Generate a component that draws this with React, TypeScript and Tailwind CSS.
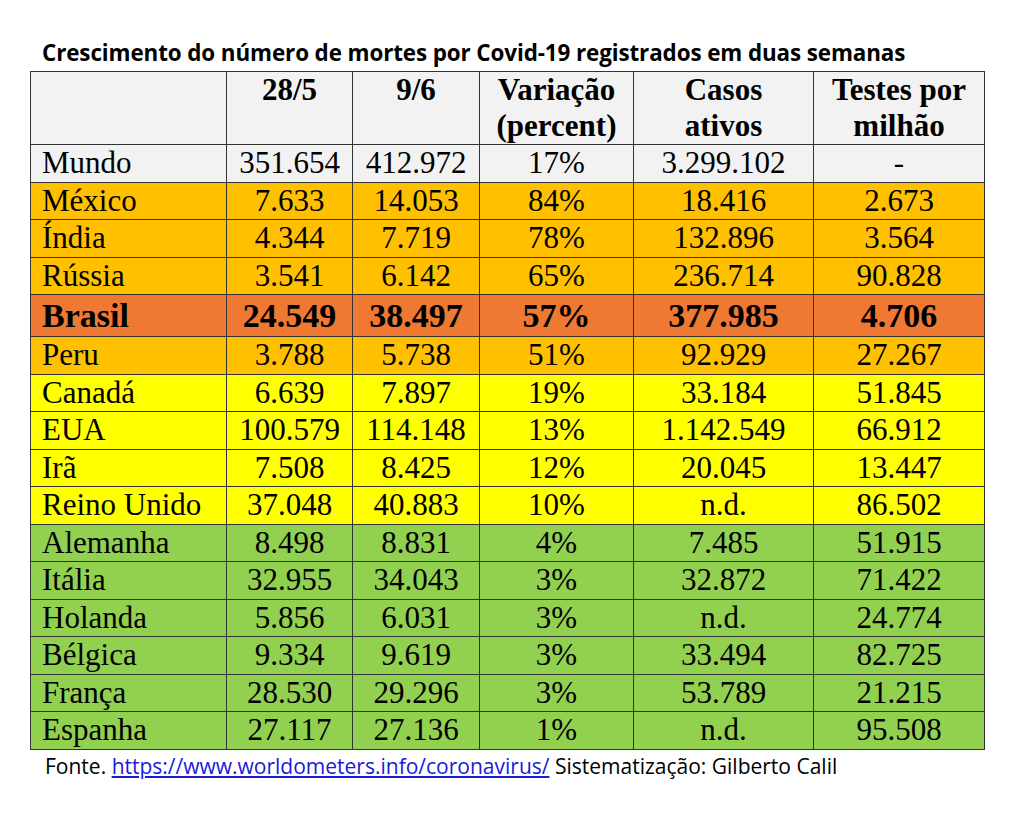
import React from 'react';

type Row = {
  name: string;
  d1: string;
  d2: string;
  pct: string;
  casos: string;
  testes: string;
  bg: string;
  bold?: boolean;
};

const rows: Row[] = [
  { name: 'Mundo', d1: '351.654', d2: '412.972', pct: '17%', casos: '3.299.102', testes: '-', bg: 'bg-[#f2f2f2]' },
  { name: 'México', d1: '7.633', d2: '14.053', pct: '84%', casos: '18.416', testes: '2.673', bg: 'bg-[#ffc000]' },
  { name: 'Índia', d1: '4.344', d2: '7.719', pct: '78%', casos: '132.896', testes: '3.564', bg: 'bg-[#ffc000]' },
  { name: 'Rússia', d1: '3.541', d2: '6.142', pct: '65%', casos: '236.714', testes: '90.828', bg: 'bg-[#ffc000]' },
  {
    name: 'Brasil',
    d1: '24.549',
    d2: '38.497',
    pct: '57%',
    casos: '377.985',
    testes: '4.706',
    bg: 'bg-[#ef7832]',
    bold: true,
  },
  { name: 'Peru', d1: '3.788', d2: '5.738', pct: '51%', casos: '92.929', testes: '27.267', bg: 'bg-[#ffc000]' },
  { name: 'Canadá', d1: '6.639', d2: '7.897', pct: '19%', casos: '33.184', testes: '51.845', bg: 'bg-[#ffff00]' },
  { name: 'EUA', d1: '100.579', d2: '114.148', pct: '13%', casos: '1.142.549', testes: '66.912', bg: 'bg-[#ffff00]' },
  { name: 'Irã', d1: '7.508', d2: '8.425', pct: '12%', casos: '20.045', testes: '13.447', bg: 'bg-[#ffff00]' },
  { name: 'Reino Unido', d1: '37.048', d2: '40.883', pct: '10%', casos: 'n.d.', testes: '86.502', bg: 'bg-[#ffff00]' },
  { name: 'Alemanha', d1: '8.498', d2: '8.831', pct: '4%', casos: '7.485', testes: '51.915', bg: 'bg-[#92d050]' },
  { name: 'Itália', d1: '32.955', d2: '34.043', pct: '3%', casos: '32.872', testes: '71.422', bg: 'bg-[#92d050]' },
  { name: 'Holanda', d1: '5.856', d2: '6.031', pct: '3%', casos: 'n.d.', testes: '24.774', bg: 'bg-[#92d050]' },
  { name: 'Bélgica', d1: '9.334', d2: '9.619', pct: '3%', casos: '33.494', testes: '82.725', bg: 'bg-[#92d050]' },
  { name: 'França', d1: '28.530', d2: '29.296', pct: '3%', casos: '53.789', testes: '21.215', bg: 'bg-[#92d050]' },
  { name: 'Espanha', d1: '27.117', d2: '27.136', pct: '1%', casos: 'n.d.', testes: '95.508', bg: 'bg-[#92d050]' },
];

const serif = "[font-family:'Liberation_Serif','Times_New_Roman',serif]";
const cell = `${serif} border-[1.5px] border-[#333] p-0 text-center`;

const App = () => (
  <div className="min-h-[816px] w-[1024px] bg-white pt-[40px] pl-[30px]">
    <div className="pl-[12px] [font-family:'Open_Sans',sans-serif] text-[22.4px] leading-[26px] font-bold tracking-[-0.1px] text-black">
      Crescimento do número de mortes por Covid-19 registrados em duas semanas
    </div>
    <table className={`${serif} mt-[5px] w-[954px] table-fixed border-collapse text-black`}>
      <colgroup>
        <col className="w-[196px]" />
        <col className="w-[126px]" />
        <col className="w-[127px]" />
        <col className="w-[154px]" />
        <col className="w-[180px]" />
        <col className="w-[171px]" />
      </colgroup>
      <thead>
        <tr className="h-[73px] bg-[#f2f2f2] align-top text-[31px] leading-[36px] font-bold">
          <th className={cell}></th>
          <th className={cell}>28/5</th>
          <th className={cell}>9/6</th>
          <th className={cell}>
            Variação
            <br />
            (percent)
          </th>
          <th className={cell}>
            Casos
            <br />
            ativos
          </th>
          <th className={cell}>
            Testes por
            <br />
            milhão
          </th>
        </tr>
      </thead>
      <tbody>
        {rows.map((r) => (
          <tr
            key={r.name}
            className={
              r.bg +
              (r.bold ? ' h-[42px] text-[34px] leading-[38px] font-bold' : ' h-[37.5px] text-[31px] leading-[34px]')
            }
          >
            <td className={`${serif} border-[1.5px] border-[#333] p-0 pl-[11px] text-left`}>{r.name}</td>
            <td className={cell}>{r.d1}</td>
            <td className={cell}>{r.d2}</td>
            <td className={cell}>{r.pct}</td>
            <td className={cell}>{r.casos}</td>
            <td className={cell}>{r.testes}</td>
          </tr>
        ))}
      </tbody>
    </table>
    <div className="mt-[2px] pl-[15px] [font-family:'Open_Sans',sans-serif] text-[21px] leading-[28px] text-black">
      Fonte.{' '}
      <a className="text-[#1a1adb] underline" href="#">
        https://www.worldometers.info/coronavirus/
      </a>{' '}
      Sistematização: Gilberto Calil
    </div>
  </div>
);

export default App;
